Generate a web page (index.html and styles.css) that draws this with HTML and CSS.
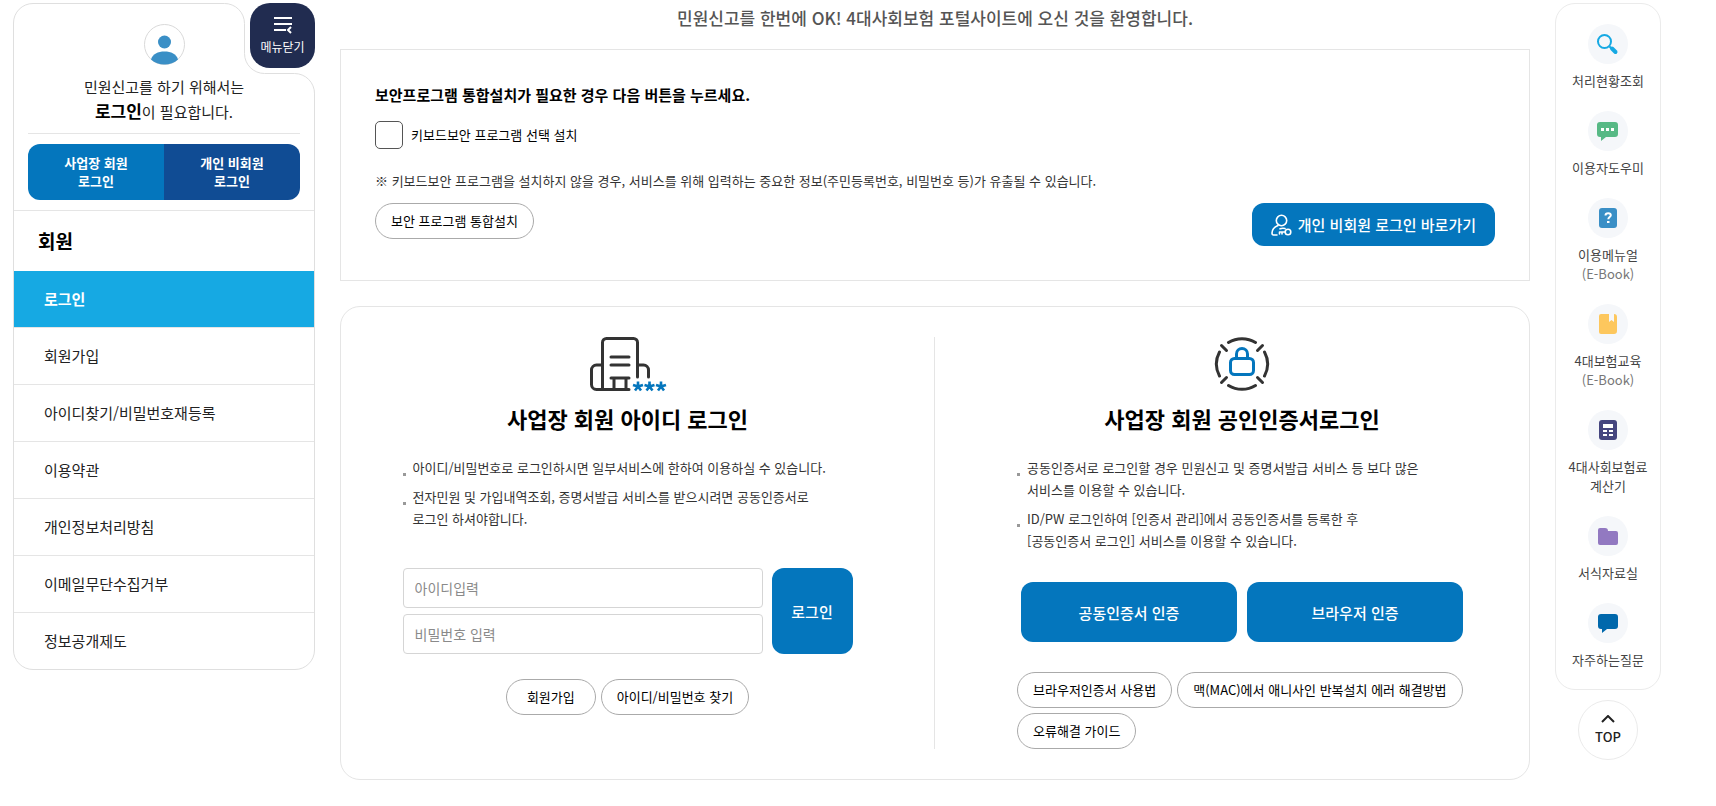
FILE: index.html
```html
<!DOCTYPE html>
<html lang="ko">

<head>
  <meta charset="UTF-8">
  <meta name="viewport" content="width=device-width, initial-scale=1.0">
  <title>4대사회보험 정보연계센터 로그인</title>
  <link rel="stylesheet" href="styles.css">
</head>

<body>
  <div class="wrap">
    <!-- Left menu -->
    <aside class="sidebar">
      <svg class="notch" width="95" height="95" viewBox="0 0 95 95" aria-hidden="true">
        <path d="M4 0 V.5 A20 20 0 0 1 24.5 20.5 V50.5 A20 20 0 0 0 44.5 70.5 H74.5 A20 20 0 0 1 94.5 90.5 H95 V0 Z" fill="#fff" />
        <path d="M4.5 .5 A20 20 0 0 1 24.5 20.5 V50.5 A20 20 0 0 0 44.5 70.5 H74.5 A20 20 0 0 1 94.5 90.5 V95" fill="none" stroke="#dfdfdf" />
      </svg>
      <button type="button" class="menu-toggle">
        <svg width="20" height="18" viewBox="0 0 20 18" fill="none" stroke="#fff" stroke-width="2" aria-hidden="true">
          <path d="M1 2h18M1 8h18M1 14h12" />
          <path d="M18 11l-3 3 3 3" />
        </svg>
        메뉴닫기
      </button>

      <div class="profile">
        <svg class="avatar" width="41" height="41" viewBox="0 0 41 41" aria-hidden="true">
          <circle cx="20.5" cy="20.5" r="20" fill="#fff" stroke="#d9d9d9" />
          <circle cx="20.5" cy="18" r="6.5" fill="#3a8fc6" />
          <path d="M7 35.500c1.500-5.500 7-8 13.500-8s12 2.500 13.500 8c-3.500 3.400-8.500 5-13.500 5s-10-1.600-13.500-5z" fill="#3a8fc6" />
        </svg>
        <p>민원신고를 하기 위해서는<br><strong>로그인</strong>이 필요합니다.</p>
        <div class="login-links">
          <a href="#" class="company">사업장 회원<br>로그인</a>
          <a href="#" class="personal">개인 비회원<br>로그인</a>
        </div>
      </div>

      <h2>회원</h2>
      <ul class="menu">
        <li class="active"><a href="#">로그인</a></li>
        <li><a href="#">회원가입</a></li>
        <li><a href="#">아이디찾기/비밀번호재등록</a></li>
        <li><a href="#">이용약관</a></li>
        <li><a href="#">개인정보처리방침</a></li>
        <li><a href="#">이메일무단수집거부</a></li>
        <li><a href="#">정보공개제도</a></li>
      </ul>
    </aside>

    <main>
      <p class="welcome">민원신고를 한번에 OK! 4대사회보험 포털사이트에 오신 것을 환영합니다.</p>

      <!-- Security program -->
      <section class="security">
        <h3>보안프로그램 통합설치가 필요한 경우 다음 버튼을 누르세요.</h3>
        <div class="check">
          <input type="checkbox" id="keyboard">
          <label for="keyboard">키보드보안 프로그램 선택 설치</label>
        </div>
        <p class="notice">※ 키보드보안 프로그램을 설치하지 않을 경우, 서비스를 위해 입력하는 중요한 정보(주민등록번호, 비밀번호 등)가 유출될 수 있습니다.</p>
        <div class="security-buttons">
          <button type="button" class="pill">보안 프로그램 통합설치</button>
          <a href="#" class="btn shortcut">
            <svg width="21" height="22" viewBox="0 0 21 22" fill="none" stroke="#fff" stroke-width="1.6" stroke-linecap="round" stroke-linejoin="round" aria-hidden="true">
              <circle cx="10.500" cy="6.500" r="5.200" />
              <path d="M7 11.500c-3.500 1.500-6 4.500-6 7.500 0 1.200.5 2 1.500 2H6" />
              <path d="M14 18H8.500v2M11 18v2M9 14.800c2-.8 3.500-.8 5-.2" />
              <circle cx="17" cy="18" r="2.800" />
            </svg>
            개인 비회원 로그인 바로가기
          </a>
        </div>
      </section>

      <!-- Login -->
      <section class="login">
        <div class="login-id">
          <svg class="login-icon" width="76" height="54" viewBox="0 0 76 54" fill="none" stroke="#333" stroke-width="3" stroke-linecap="round" aria-hidden="true">
            <path d="M12.500 52V5.500a4 4 0 0 1 4-4h27a4 4 0 0 1 4 4V40" />
            <path d="M12 28H6.500a5 5 0 0 0-5 5v14.500a5 5 0 0 0 5 5H39" />
            <path d="M48 28h5.500a5 5 0 0 1 5 5v7M21 20h18M21 28h18M21 41h18M24 41v11M36 41v11" />
            <g stroke="#0476bd" stroke-width="2.600" stroke-linecap="butt">
              <path id="star" d="M48 49.500v-5M48 49.500l5-1.600M48 49.500l3 4M48 49.500l-3 4M48 49.500l-5-1.600" />
              <use href="#star" x="11.500" />
              <use href="#star" x="23" />
            </g>
          </svg>
          <h3>사업장 회원 아이디 로그인</h3>
          <ul class="guide">
            <li>아이디/비밀번호로 로그인하시면 일부서비스에 한하여 이용하실 수 있습니다.</li>
            <li>전자민원 및 가입내역조회, 증명서발급 서비스를 받으시려면 공동인증서로<br>로그인 하셔야합니다.</li>
          </ul>
          <form class="login-form">
            <div class="fields">
              <input type="text" name="userId" placeholder="아이디입력" aria-label="아이디입력">
              <input type="password" name="userPw" placeholder="비밀번호 입력" aria-label="비밀번호 입력">
            </div>
            <button type="submit" class="btn">로그인</button>
          </form>
          <div class="id-links">
            <a href="#" class="pill join">회원가입</a>
            <a href="#" class="pill">아이디/비밀번호 찾기</a>
          </div>
        </div>

        <div class="login-cert">
          <svg class="login-icon" width="54" height="54" viewBox="0 0 54 54" fill="none" stroke="#333" stroke-width="3" stroke-linecap="round" aria-hidden="true">
            <path d="M13.500 5.500a25.500 25.500 0 0 1 27 0M13.500 48.500a25.500 25.500 0 0 0 27 0M4.500 15a25.500 25.500 0 0 0 0 24M49.500 15a25.500 25.500 0 0 1 0 24" />
            <path d="M6.500 8.500l5 5M47.500 8.500l-5 5M6.500 45.500l5-5M47.500 45.500l-5-5" />
            <g stroke="#0476bd">
              <rect x="15.500" y="21.500" width="23" height="16" rx="4" />
              <path d="M21.500 21v-4a5.500 5.500 0 0 1 11 0v4" />
            </g>
          </svg>
          <h3>사업장 회원 공인인증서로그인</h3>
          <ul class="guide">
            <li>공동인증서로 로그인할 경우 민원신고 및 증명서발급 서비스 등 보다 많은<br>서비스를 이용할 수 있습니다.</li>
            <li>ID/PW 로그인하여 [인증서 관리]에서 공동인증서를 등록한 후<br>[공동인증서 로그인] 서비스를 이용할 수 있습니다.</li>
          </ul>
          <div class="cert-buttons">
            <button type="button" class="btn">공동인증서 인증</button>
            <button type="button" class="btn">브라우저 인증</button>
          </div>
          <div class="cert-links">
            <a href="#" class="pill">브라우저인증서 사용법</a>
            <a href="#" class="pill">맥(MAC)에서 애니사인 반복설치 에러 해결방법</a>
            <a href="#" class="pill">오류해결 가이드</a>
          </div>
        </div>
      </section>
    </main>

    <!-- Quick menu -->
    <aside class="quick">
      <nav class="quick-menu">
        <a href="#">
          <svg width="40" height="40" viewBox="0 0 40 40" aria-hidden="true">
            <circle cx="16.500" cy="17.500" r="6.500" fill="none" stroke="#16a9e3" stroke-width="2" />
            <path d="M21.500 22.500l2 2" stroke="#16a9e3" stroke-width="2" />
            <path d="M24 24.500l3.500 3.500" stroke="#16a9e3" stroke-width="4" stroke-linecap="round" />
          </svg>
          <span>처리현황조회</span>
        </a>
        <a href="#">
          <svg width="40" height="40" viewBox="0 0 40 40" aria-hidden="true">
            <path d="M12 11h15a3 3 0 0 1 3 3v9a3 3 0 0 1-3 3h-9l-5 4v-4h-1a3 3 0 0 1-3-3v-9a3 3 0 0 1 3-3z" fill="#57b985" />
            <path d="M13 17h3v3h-3zM18 17h3v3h-3zM23 17h3v3h-3z" fill="#fff" />
          </svg>
          <span>이용자도우미</span>
        </a>
        <a href="#">
          <svg width="40" height="40" viewBox="0 0 40 40" aria-hidden="true">
            <rect x="11" y="10" width="18" height="20" rx="3" fill="#3a8fc6" />
            <path d="M17.500 17.500c0-1.500 1-2.200 2.700-2.200 1.600 0 2.600.8 2.600 2 0 1.800-2.500 1.800-2.500 4" fill="none" stroke="#fff" stroke-width="2" />
            <path d="M19 23h2.500v2H19z" fill="#fff" />
          </svg>
          <span>이용메뉴얼<br><small>(E-Book)</small></span>
        </a>
        <a href="#">
          <svg width="40" height="40" viewBox="0 0 40 40" aria-hidden="true">
            <path d="M13 10h8v8l2.500-2 2.500 2v-8a3 3 0 0 1 3 3v14a3 3 0 0 1-3 3H13a2 2 0 0 1-2-2V12a2 2 0 0 1 2-2z" fill="#fdc75d" />
          </svg>
          <span>4대보험교육<br><small>(E-Book)</small></span>
        </a>
        <a href="#">
          <svg width="40" height="40" viewBox="0 0 40 40" aria-hidden="true">
            <rect x="11" y="10" width="18" height="20" rx="3" fill="#45467f" />
            <path d="M15 14h10v4H15zM15 20h4v2h-4zM21 20h4v2h-4zM15 24h4v2h-4zM21 24h4v2h-4z" fill="#fff" />
          </svg>
          <span>4대사회보험료<br>계산기</span>
        </a>
        <a href="#">
          <svg width="40" height="40" viewBox="0 0 40 40" aria-hidden="true">
            <path d="M12 12h5a3 3 0 0 1 3 3h8a2 2 0 0 1 2 2v10a2 2 0 0 1-2 2H12a2 2 0 0 1-2-2V14a2 2 0 0 1 2-2z" fill="#9279c1" />
          </svg>
          <span>서식자료실</span>
        </a>
        <a href="#">
          <svg width="40" height="40" viewBox="0 0 40 40" aria-hidden="true">
            <path d="M13 11h14a3 3 0 0 1 3 3v9a3 3 0 0 1-3 3h-8l-5 4v-4h-1a3 3 0 0 1-3-3v-9a3 3 0 0 1 3-3z" fill="#0068ac" />
          </svg>
          <span>자주하는질문</span>
        </a>
      </nav>
      <a href="#" class="top">
        <svg width="14" height="8" viewBox="0 0 14 8" fill="none" stroke="#222" stroke-width="2" aria-hidden="true">
          <path d="M1 7l6-6 6 6" />
        </svg>
        TOP
      </a>
    </aside>
  </div>
</body>

</html>
```

FILE: styles.css
```css
* {
  box-sizing: border-box;
}

body {
  margin: 0;
  font-family: "Noto Sans CJK KR", "Noto Sans", sans-serif;
  font-size: 13px;
  color: #333;
  background-color: #fff;
}

h2,
h3,
p,
ul {
  margin: 0;
  padding: 0;
}

ul {
  list-style: none;
}

a {
  color: inherit;
  text-decoration: none;
}

button,
input {
  font-family: inherit;
  margin: 0;
}

button {
  cursor: pointer;
}

.wrap {
  display: flex;
  align-items: flex-start;
  gap: 25px;
  padding: 3px 55px 24px 13px;
}

/* Left menu */
.sidebar {
  position: relative;
  flex: 0 0 302px;
  border: 1px solid #dfdfdf;
  border-radius: 20px;
}

.notch {
  position: absolute;
  top: -1px;
  right: -1px;
}

.menu-toggle {
  position: absolute;
  top: -1px;
  right: -1px;
  width: 65px;
  height: 65px;
  padding: 0;
  border: none;
  border-radius: 20px;
  background-color: #212c50;
  color: #fff;
  font-size: 12px;
  line-height: 18px;
}

.menu-toggle svg {
  display: block;
  margin: 0 auto 4px;
}

.profile {
  padding: 20px 14px 10px;
  border-bottom: 1px solid #e5e5e5;
  text-align: center;
}

.avatar {
  display: block;
  margin: 0 auto 9px;
}

.profile p {
  padding-bottom: 9px;
  border-bottom: 1px solid #e5e5e5;
  font-size: 15px;
  line-height: 25px;
  color: #222;
}

.profile strong {
  font-size: 17px;
  line-height: 20px;
  color: #000;
}

.login-links {
  display: flex;
  margin-top: 10px;
  border-radius: 12px;
  overflow: hidden;
}

.login-links a {
  flex: 1;
  padding: 10px 0;
  color: #fff;
  font-weight: bold;
  line-height: 18px;
}

.company {
  background-color: #0476bd;
}

.personal {
  background-color: #104c94;
}

.sidebar h2 {
  padding-left: 24px;
  font-size: 19px;
  line-height: 60px;
  color: #000;
}

.menu li {
  border-top: 1px solid #e5e5e5;
}

.menu a {
  display: block;
  padding-left: 30px;
  font-size: 15px;
  line-height: 56px;
  color: #222;
}

.menu .active {
  border-top: none;
  background-color: #16a9e3;
}

.menu .active a {
  color: #fff;
  font-weight: bold;
}

/* Common buttons */
.btn {
  border: none;
  border-radius: 12px;
  background-color: #0476bd;
  color: #fff;
  font-size: 15px;
  font-weight: 500;
}

.pill {
  display: inline-block;
  padding: 0 15px;
  border: 1px solid #aaa;
  border-radius: 18px;
  background-color: #fff;
  color: #000;
  font-size: 13px;
  line-height: 34px;
}

/* Content */
main {
  flex: 1;
  min-width: 0;
}

.welcome {
  margin-bottom: 16px;
  text-align: center;
  font-size: 17px;
  font-weight: 500;
  line-height: 30px;
  color: #555;
}

.security {
  padding: 33px 34px 34px;
  border: 1px solid #e5e5e5;
}

.security h3 {
  font-size: 15px;
  line-height: 24px;
  color: #000;
}

.check {
  display: flex;
  align-items: center;
  gap: 8px;
  margin: 14px 0 21px;
  color: #000;
}

.check input {
  appearance: none;
  width: 28px;
  height: 28px;
  border: 1px solid #555;
  border-radius: 5px;
  background-color: #fff;
}

.check input:checked {
  background-color: #0476bd;
}

.check label {
  padding-bottom: 2px;
}

.notice {
  margin-bottom: 11px;
  line-height: 22px;
}

.security-buttons {
  display: flex;
  justify-content: space-between;
  align-items: flex-start;
}

.shortcut {
  display: flex;
  align-items: center;
  gap: 6px;
  padding: 0 19px;
  line-height: 43px;
}

/* Login */
.login {
  display: grid;
  grid-template-columns: 1fr 1fr;
  margin-top: 25px;
  padding: 30px 0;
  border: 1px solid #e5e5e5;
  border-radius: 20px;
}

.login-id,
.login-cert {
  display: flex;
  flex-direction: column;
  align-items: center;
}

.login-id {
  padding-right: 20px;
  border-right: 1px solid #e5e5e5;
}

.login-cert {
  padding-left: 20px;
}

.login-icon {
  margin-bottom: 11px;
  overflow: visible;
}

.login h3 {
  font-size: 22px;
  line-height: 32px;
  color: #000;
}

.guide,
.login-form,
.cert-buttons,
.cert-links {
  width: 450px;
  max-width: 100%;
}

.guide {
  margin-top: 23px;
}

.guide li {
  position: relative;
  margin-bottom: 7px;
  padding-left: 10px;
  line-height: 22px;
}

.guide li::before {
  content: "";
  position: absolute;
  top: 16px;
  left: 0;
  width: 3px;
  height: 3px;
  background-color: #999;
}

.login-form {
  display: flex;
  gap: 9px;
  margin-top: 31px;
}

.fields {
  flex: 1;
  display: flex;
  flex-direction: column;
  gap: 6px;
}

.fields input {
  width: 100%;
  height: 40px;
  padding: 0 11px;
  border: 1px solid #d5d5d5;
  border-radius: 4px;
  font-size: 14px;
}

.fields input::placeholder {
  color: #8a8a8a;
}

.login-form .btn {
  width: 81px;
}

.id-links {
  display: flex;
  gap: 5px;
  margin-top: 25px;
}

.pill.join {
  padding: 0 20px;
}

.cert-buttons {
  display: flex;
  gap: 10px;
  margin-top: 23px;
  padding: 0 4px;
}

.cert-buttons .btn {
  flex: 1;
  height: 60px;
}

.cert-links {
  display: flex;
  flex-wrap: wrap;
  gap: 5px;
  margin-top: 30px;
}

/* Quick menu */
.quick {
  flex: 0 0 106px;
}

.quick-menu {
  display: flex;
  flex-direction: column;
  gap: 21px;
  padding: 20px 0;
  border: 1px solid #ebebeb;
  border-radius: 20px;
}

.quick-menu a {
  text-align: center;
  line-height: 19px;
  color: #444;
}

.quick-menu svg {
  display: block;
  margin: 0 auto 7px;
  border-radius: 50%;
  background-color: #f5f7fa;
}

.quick-menu span {
  display: block;
}

.quick-menu small {
  font-size: 13px;
  color: #777;
}

.top {
  display: flex;
  flex-direction: column;
  align-items: center;
  justify-content: center;
  gap: 5px;
  width: 60px;
  height: 60px;
  margin: 10px auto 0;
  border: 1px solid #ebebeb;
  border-radius: 50%;
  font-weight: 500;
  line-height: 18px;
  color: #222;
}
```
